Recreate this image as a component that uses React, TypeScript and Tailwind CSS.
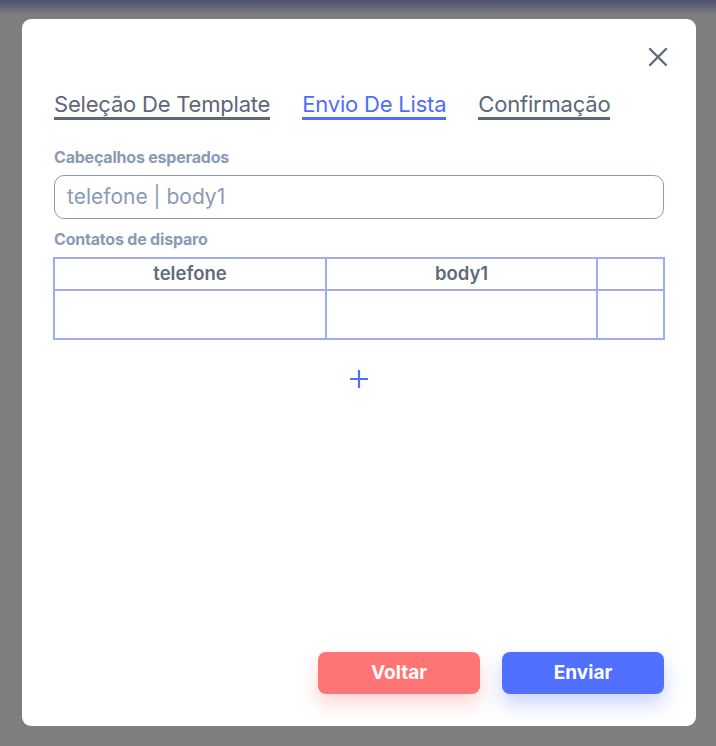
import React from "react";

export default function App() {
  return (
    <div
      className="w-[716px] h-[746px] overflow-hidden pt-[19px] pl-[22px]"
      style={{ background: "linear-gradient(to bottom, #4b5072 0px, #7d7e80 14px, #7f7f7f 30px, #7f7f7f 100%)", fontFamily: "Inter, 'Noto Sans', sans-serif" }}
    >
      <div className="w-[674px] h-[707px] bg-white rounded-[9px] px-[32px] flex flex-col">
        <div className="flex justify-end mt-[28px] -mr-[4px]">
          <svg width="20" height="20" viewBox="0 0 20 20" fill="none">
            <path d="M2 2 L18 18 M18 2 L2 18" stroke="#5f6b7a" strokeWidth="2.4" strokeLinecap="round" />
          </svg>
        </div>
        <div className="flex gap-[32px] mt-[24px] text-[22px] leading-[26px] tracking-[-0.2px]">
          <span className="text-[#5c6778] border-b-[3px] border-[#5c6778]">Seleção De Template</span>
          <span className="text-[#4f6ef7] border-b-[3px] border-[#4f6ef7]">Envio De Lista</span>
          <span className="text-[#5c6778] border-b-[3px] border-[#5c6778]">Confirmação</span>
        </div>
        <div className="mt-[27px] text-[16px] leading-[20px] font-bold text-[#8a9ab5] tracking-[-0.2px]">Cabeçalhos esperados</div>
        <div className="mt-[8px] h-[44px] rounded-[10px] border border-[#8e9ab0] flex items-center px-[12px] text-[21px] text-[#8a9ab5]">
          telefone | body1
        </div>
        <div className="mt-[10px] text-[16px] leading-[20px] font-bold text-[#8a9ab5] tracking-[-0.2px]">Contatos de disparo</div>
        <div className="mt-[8px] -ml-[1px] -mr-[1px] border-2 border-[#9eabf8] grid grid-cols-[272px_271px_1fr] text-[18.5px] font-semibold text-[#5f6b7a]">
          <div className="h-[32px] flex items-center justify-center border-r-2 border-b-2 border-[#9eabf8]">telefone</div>
          <div className="h-[32px] flex items-center justify-center border-r-2 border-b-2 border-[#9eabf8]">body1</div>
          <div className="h-[32px] border-b-2 border-[#9eabf8]"></div>
          <div className="h-[47px] border-r-2 border-[#9eabf8]"></div>
          <div className="h-[47px] border-r-2 border-[#9eabf8]"></div>
          <div className="h-[47px]"></div>
        </div>
        <div className="flex justify-center mt-[29px]">
          <svg width="20" height="20" viewBox="0 0 20 20" fill="none">
            <path d="M10 1 V19 M1 10 H19" stroke="#4f6ef7" strokeWidth="2.2" />
          </svg>
        </div>
        <div className="flex-1" />
        <div className="flex justify-end gap-[22px] mb-[32px]">
          <button className="w-[162px] h-[42px] rounded-[8px] bg-[#ff7474] text-white text-[19px] font-bold shadow-[0_10px_20px_rgba(255,116,116,0.3)]">
            Voltar
          </button>
          <button className="w-[162px] h-[42px] rounded-[8px] bg-[#5170ff] text-white text-[19px] font-bold shadow-[0_10px_20px_rgba(81,112,255,0.3)]">
            Enviar
          </button>
        </div>
      </div>
    </div>
  );
}
